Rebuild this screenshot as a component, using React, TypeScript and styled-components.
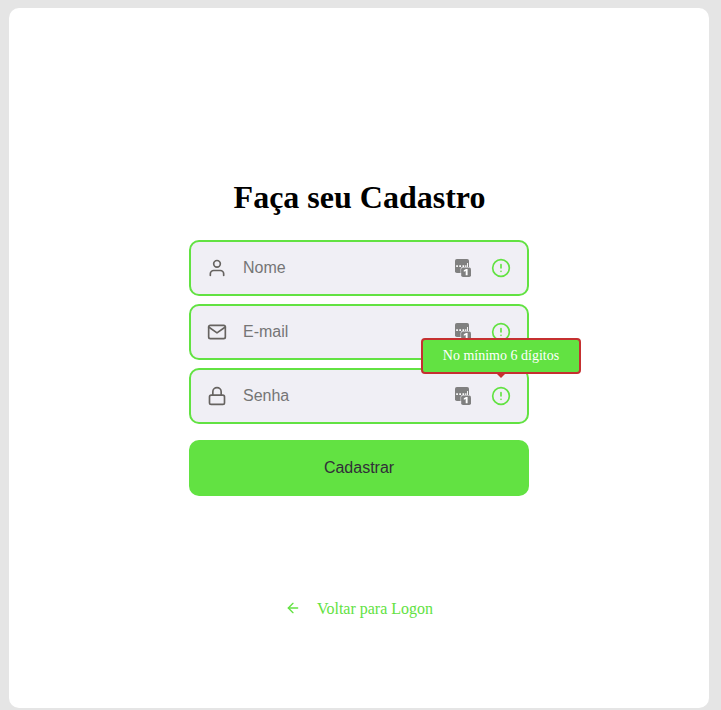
import React from 'react';
import styled, { createGlobalStyle } from 'styled-components';
import type { IconType } from 'react-icons';
import { FiAlertCircle, FiArrowLeft, FiLock, FiMail, FiUser } from 'react-icons/fi';

const GlobalStyle = createGlobalStyle`
  * { margin: 0; padding: 0; box-sizing: border-box; }
  body {
    background: #e5e5e5;
    font-family: 'Liberation Serif', 'Times New Roman', serif;
    font-size: 16px;
    overflow: hidden;
  }
`;

const Page = styled.main`
  height: 710px;
  padding: 8px 12px 2px 9px;
`;

const Card = styled.section`
  width: 700px;
  height: 700px;
  padding-top: 171px;
  border-radius: 10px;
  background: #fff;
  display: flex;
  flex-direction: column;
  align-items: center;
`;

const Form = styled.form`
  width: 340px;
  display: flex;
  flex-direction: column;
`;

const Title = styled.h1`
  height: 37px;
  margin-bottom: 24px;
  padding-left: 1px;
  font-size: 32px;
  line-height: 37px;
  font-weight: 700;
  color: #000;
  text-align: center;
`;

const Fields = styled.div`
  display: flex;
  flex-direction: column;
  gap: 8px;
`;

const FieldBox = styled.div`
  height: 56px;
  padding: 0 16px;
  border: 2px solid #62e242;
  border-radius: 10px;
  background: #f0eff5;
  color: #666360;
  display: flex;
  align-items: center;
`;

const Input = styled.input`
  flex: 1;
  min-width: 0;
  margin: 0 20px 0 16px;
  border: 0;
  outline: 0;
  background: transparent;
  color: #312e38;
  font: 16px 'Liberation Sans', Arial, sans-serif;
  &::placeholder { color: #757575; opacity: 1; }
`;

const ManagerIcon = styled.svg`
  width: 16px;
  height: 18px;
  margin-right: 20px;
  flex: none;
`;

const Alert = styled.div`
  position: relative;
  width: 20px;
  height: 20px;
  color: #62e242;
  svg { display: block; }
`;

const Tooltip = styled.span`
  position: absolute;
  z-index: 1;
  bottom: calc(100% + 12px);
  left: 50%;
  transform: translateX(-50%);
  width: 160px;
  height: 36px;
  border: 2px solid #c53030;
  border-radius: 4px;
  background: #62e242;
  color: #fff;
  font-size: 14px;
  line-height: 32px;
  text-align: center;
  &::before {
    content: '';
    position: absolute;
    top: 100%;
    left: 50%;
    transform: translateX(-50%);
    border: solid transparent;
    border-top-color: #c53030;
    border-width: 6px 6px 0;
  }
`;

const Submit = styled.button`
  height: 56px;
  margin-top: 16px;
  border: 0;
  border-radius: 10px;
  background: #62e242;
  color: #312e38;
  font: 16px 'Liberation Sans', Arial, sans-serif;
`;

const BackLink = styled.a`
  height: 18px;
  margin-top: 104px;
  display: flex;
  align-items: center;
  gap: 16px;
  color: #62e242;
  line-height: 18px;
  text-decoration: none;
  svg { margin-bottom: 2px; }
`;

interface FieldProps {
  icon: IconType;
  label: string;
  type?: string;
  hint?: string;
}

function Field({ icon: Icon, label, type = 'text', hint }: FieldProps) {
  return (
    <FieldBox>
      <Icon size={20} />
      <Input type={type} placeholder={label} />
      <ManagerIcon viewBox="0 0 16 18" aria-hidden="true">
        <rect width="14" height="14" rx="1.8" fill="#808080" />
        <path d="M1.2 6.2h1.7v1.7H1.2zM4.3 6.2H6v1.7H4.3zM7.5 6.2h1.7v1.7H7.5zM10.2 6.2h1.2v1.7h-1.2zM12 4h.9v3.9H12z" fill="#fff" />
        <path d="M5.6 14V10q0-2 2-2H14v1H8Q6.4 9 6.4 10.5V14z" fill="#f0eff5" />
        <rect x="6.2" y="8.6" width="9.8" height="9.4" rx="1.8" fill="#808080" />
        <path d="M8.8 11.3 11 10.1h1.6V16.2h-1.9V12l-1.9.8z" fill="#fff" />
      </ManagerIcon>
      <Alert>
        <FiAlertCircle size={20} />
        {hint && <Tooltip>{hint}</Tooltip>}
      </Alert>
    </FieldBox>
  );
}

export default function App() {
  return (
    <>
      <GlobalStyle />
      <Page>
        <Card>
          <Form>
            <Title>Faça seu Cadastro</Title>
            <Fields>
              <Field icon={FiUser} label="Nome" />
              <Field icon={FiMail} label="E-mail" />
              <Field icon={FiLock} label="Senha" type="password" hint="No mínimo 6 dígitos" />
            </Fields>
            <Submit type="button">Cadastrar</Submit>
          </Form>
          <BackLink href="#">
            <FiArrowLeft />
            Voltar para Logon
          </BackLink>
        </Card>
      </Page>
    </>
  );
}
